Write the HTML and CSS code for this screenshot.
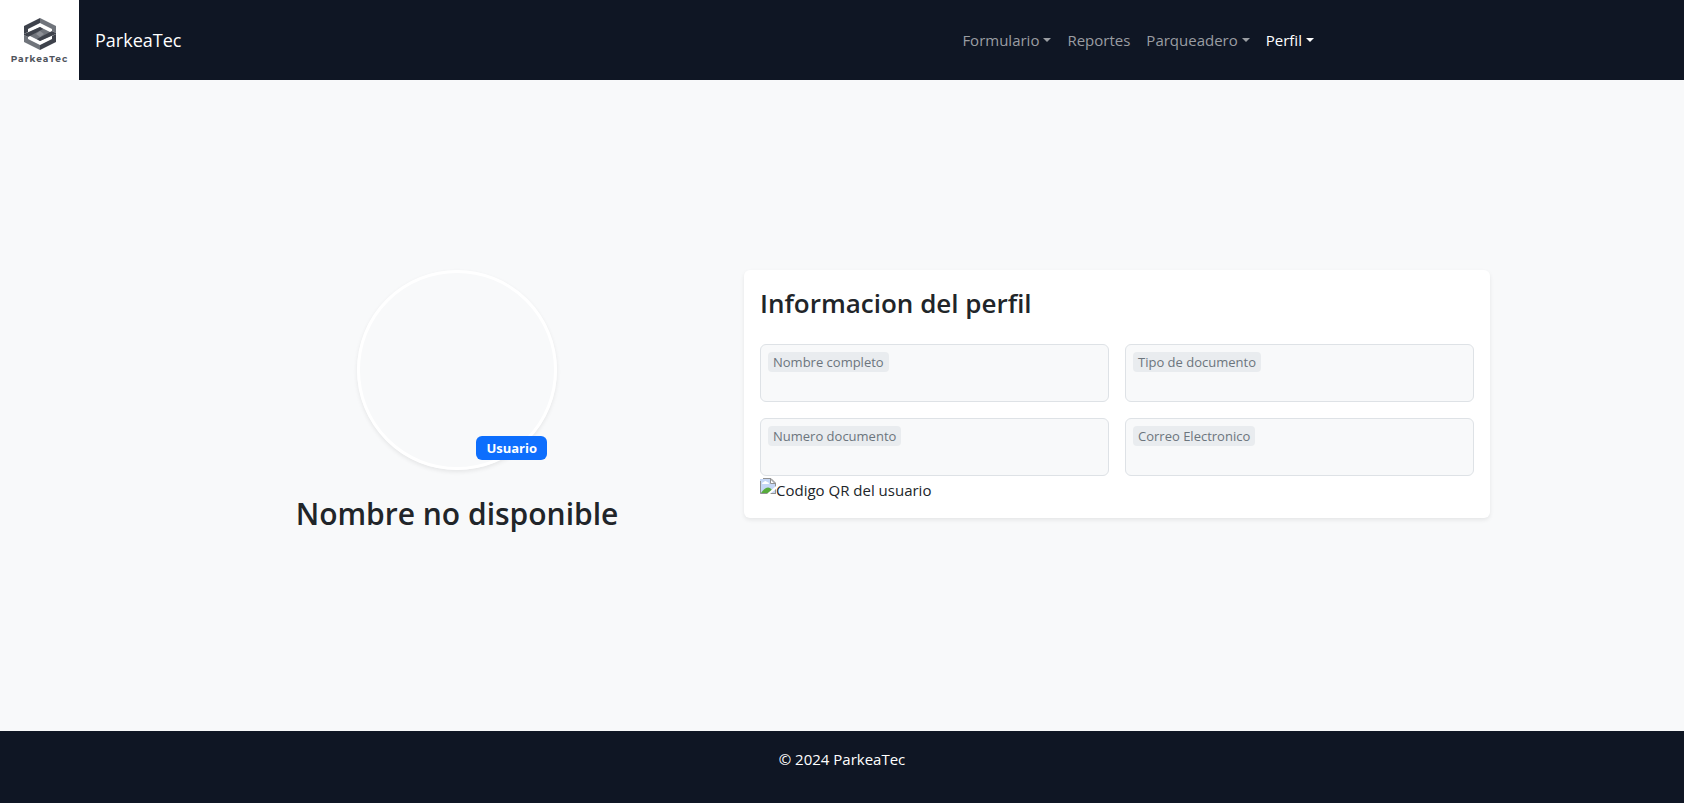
FILE: index.html
```html
<!DOCTYPE html>
<html lang="es">
<head>
<meta charset="utf-8">
<meta name="viewport" content="width=device-width, initial-scale=1">
<title>ParkeaTec</title>
<link rel="stylesheet" href="styles.css">
</head>
<body>
<header class="navbar">
  <a class="brand" href="#">
    <span class="logo">
      <svg class="logo-mark" viewBox="0 0 32 32" aria-hidden="true">
        <path fill="#70747b" d="M16 0 32 8v7l-4-2v-2L16 5z"/>
        <path fill="#3e424b" d="M16 0v5L4 11v3l-4 2V8z"/>
        <path fill="#70747b" d="M16 32 0 24v-7l4 2v2l12 6z"/>
        <path fill="#3e424b" d="M16 32v-5l12-6v-3l4-2v8z"/>
        <path fill="#70747b" d="M16 9l14 7-14 7-14-7z"/>
        <path fill="#3e424b" d="M0 16 16 9l3 2L4 19l-4-2z"/>
        <path fill="#3e424b" d="M32 16 16 23l-3-2 15-8 4 2z"/>
        <path fill="#8d9096" d="M12 16l4-3 4 3-4 3z"/>
      </svg>
      <span class="logo-text">ParkeaTec</span>
    </span>
    <span class="brand-name">ParkeaTec</span>
  </a>
  <nav class="menu">
    <button class="menu-item dropdown" type="button">Formulario</button>
    <a class="menu-item" href="#">Reportes</a>
    <button class="menu-item dropdown" type="button">Parqueadero</button>
    <button class="menu-item dropdown active" type="button">Perfil</button>
  </nav>
</header>
<main class="main">
  <div class="profile">
    <section class="person">
      <div class="avatar"><span class="role">Usuario</span></div>
      <h2 class="name">Nombre no disponible</h2>
    </section>
    <section class="card">
      <h3 class="card-title">Informacion del perfil</h3>
      <div class="fields">
        <div class="field"><label class="tag" for="nombre">Nombre completo</label><input class="value" id="nombre" type="text" readonly></div>
        <div class="field"><label class="tag" for="tipo">Tipo de documento</label><input class="value" id="tipo" type="text" readonly></div>
        <div class="field"><label class="tag" for="numero">Numero documento</label><input class="value" id="numero" type="text" readonly></div>
        <div class="field"><label class="tag" for="correo">Correo Electronico</label><input class="value" id="correo" type="email" readonly></div>
      </div>
      <div class="qr">
        <svg class="qr-icon" viewBox="0 0 16 16" aria-hidden="true">
          <path fill="#c5d7f5" d="M0 1h11l4 4v11H0z"/>
          <path fill="#fff" d="M2 6q0-2 2-2 1-2 3 0 2 0 2 2z"/>
          <path fill="#57ab3c" d="M1 15q5-7 9-5l2 2-4 3z"/>
          <path fill="#fff" stroke="#929292" d="M10.500 1v4.500H15z"/>
          <path fill="none" stroke="#929292" d="M3 .5h8l4.500 4.500v11M.5 3v12.500H16"/>
          <path fill="#fff" d="M16 8v3l-6 5H7z"/>
        </svg>
        <span>Codigo QR del usuario</span>
      </div>
    </section>
  </div>
</main>
<footer class="footer">© 2024 ParkeaTec</footer>
</body>
</html>
```
FILE: styles.css
```css
* { box-sizing: border-box; }
body {
  margin: 0;
  min-height: 100vh;
  display: flex;
  flex-direction: column;
  background: #f8f9fa;
  color: #212529;
  font: 15px/24px "Segoe UI", "Open Sans", sans-serif;
}
h2, h3 { margin: 0; font-weight: 600; }
.navbar {
  display: flex;
  align-items: center;
  justify-content: space-between;
  padding-right: 21.5%;
  background: #0f1624;
}
.brand {
  display: flex;
  align-items: center;
  gap: 16px;
  color: #fff;
  text-decoration: none;
}
.logo {
  width: 79px;
  height: 80px;
  padding-top: 18px;
  display: flex;
  flex-direction: column;
  align-items: center;
  background: #fff;
}
.logo-mark { width: 32px; height: 32px; }
.logo-text {
  margin-top: 3px;
  color: #50545c;
  font: 700 9px/12px "Montserrat", "Open Sans", sans-serif;
  letter-spacing: 1px;
}
.brand-name { font-size: 18px; line-height: 30px; }
.menu { display: flex; }
.menu-item {
  display: flex;
  align-items: center;
  gap: 4px;
  padding: 8px;
  border: 0;
  background: none;
  color: #9a9da2;
  font: inherit;
  text-decoration: none;
}
.dropdown::after {
  content: "";
  border: 4px solid transparent;
  border-top-color: currentColor;
  border-bottom: 0;
}
.active { color: #fff; }
.main {
  flex: 1;
  display: flex;
  align-items: center;
  justify-content: center;
}
.profile {
  width: 100%;
  max-width: 1320px;
  display: grid;
  grid-template-columns: 5fr 7fr;
  align-items: start;
}
.person {
  padding: 0 12px 8px;
  display: flex;
  flex-direction: column;
  align-items: center;
  gap: 24px;
}
.avatar {
  position: relative;
  width: 200px;
  height: 200px;
  border: 3px solid #fff;
  border-radius: 50%;
  box-shadow: 0 2px 4px rgba(0, 0, 0, .08);
}
.role {
  position: absolute;
  right: 7px;
  bottom: 7px;
  padding: 0 10px;
  border-radius: 6px;
  background: #0d6efd;
  color: #fff;
  font-size: 13px;
  font-weight: 700;
}
.name { font-size: 30px; line-height: 39px; text-align: center; }
.card {
  margin: 0 12px;
  padding: 16px;
  border-radius: 6px;
  background: #fff;
  box-shadow: 0 2px 4px rgba(0, 0, 0, .08);
}
.card-title { margin-bottom: 24px; font-size: 26px; line-height: 34px; }
.fields {
  display: grid;
  grid-template-columns: 1fr 1fr;
  gap: 16px;
}
.field {
  height: 58px;
  padding: 7px;
  display: flex;
  flex-direction: column;
  align-items: flex-start;
  border: 1px solid #dee2e6;
  border-radius: 6px;
  background: #f8f9fa;
}
.tag {
  padding: 0 5px;
  border-radius: 4px;
  background: #e9ecef;
  color: #6c757d;
  font-size: 13px;
  line-height: 20px;
}
.value {
  width: 100%;
  height: 22px;
  padding: 0;
  border: 0;
  outline: 0;
  background: none;
  color: inherit;
  font: inherit;
}
.qr { display: flex; padding-top: 2px; }
.qr-icon { width: 16px; height: 16px; }
.footer {
  height: 72px;
  padding: 16px;
  background: #0f1624;
  color: #fff;
  text-align: center;
}
```
